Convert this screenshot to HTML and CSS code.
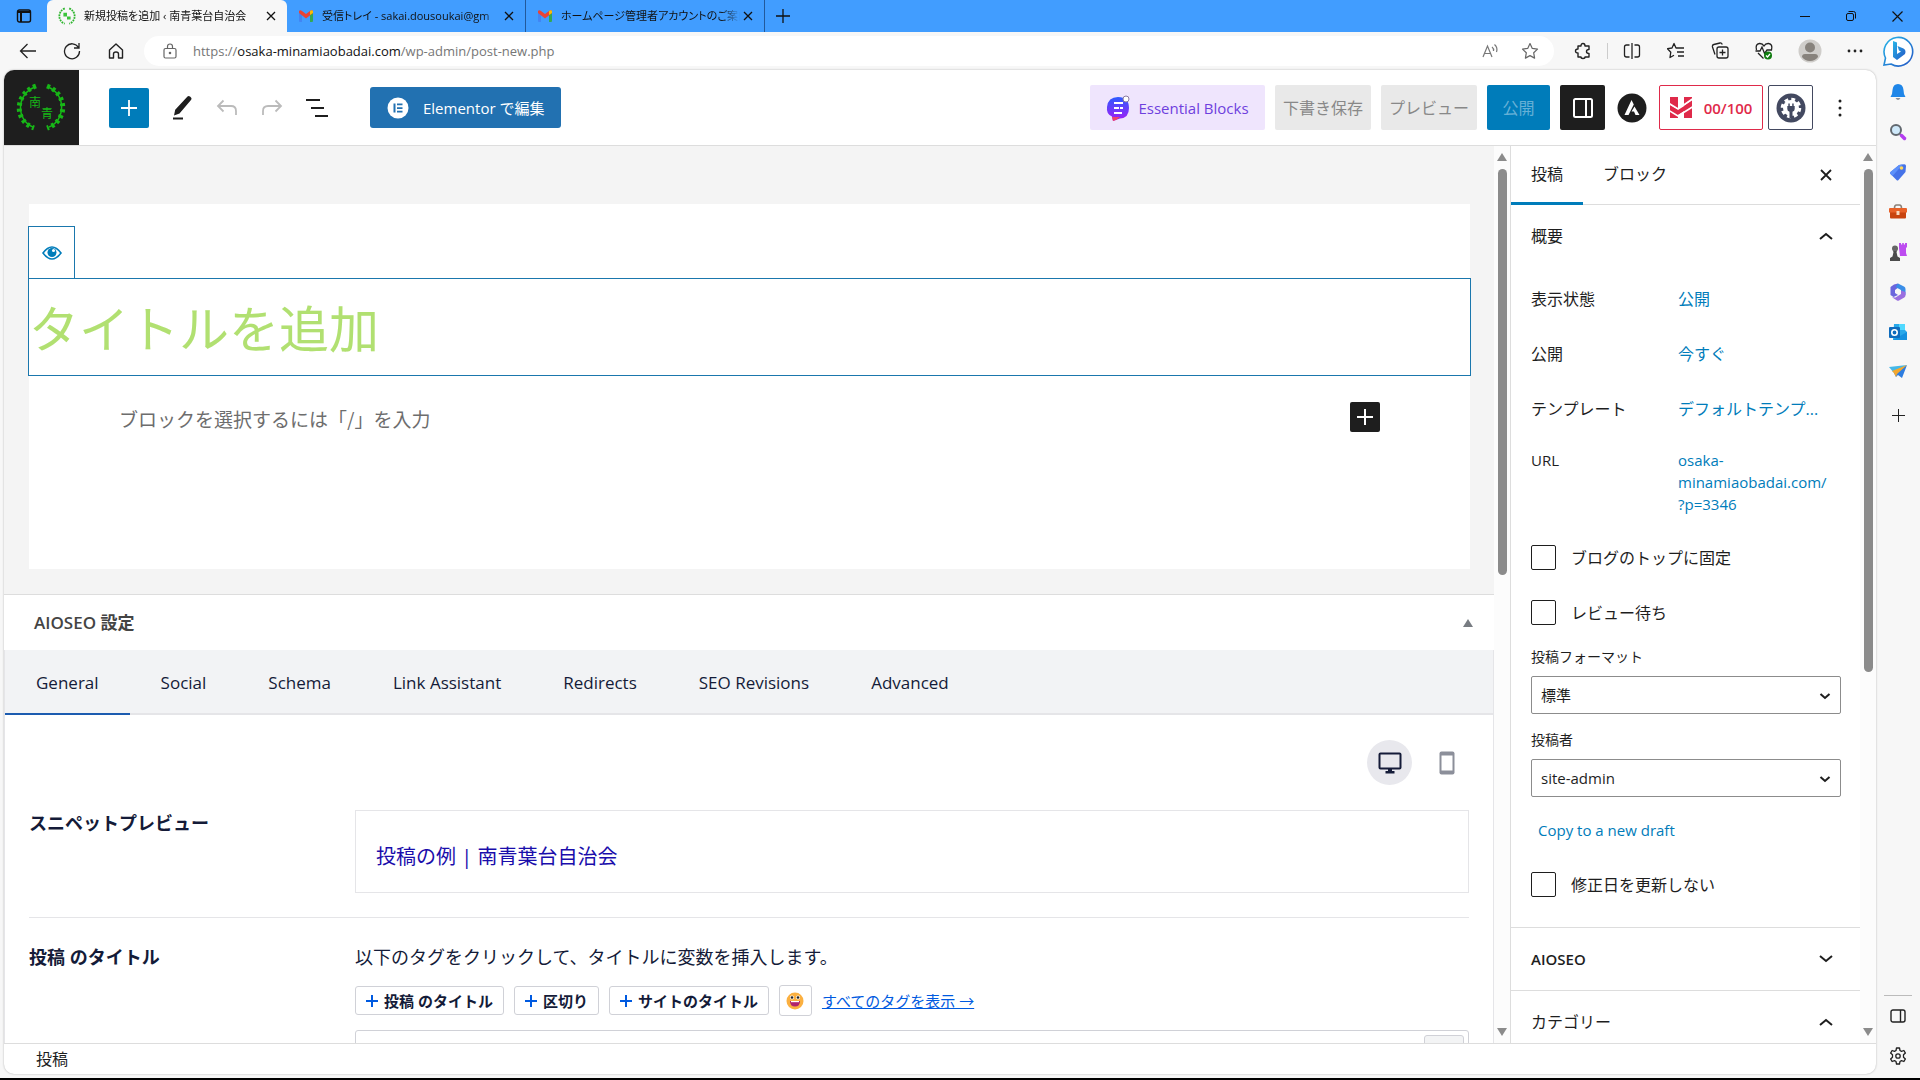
FILE: index.html
```html
<!DOCTYPE html>
<html lang="ja">
  <head>
    <meta charset="utf-8" />
    <title>新規投稿を追加 ‹ 南青葉台自治会</title>
    <meta name="viewport" content="width=device-width, initial-scale=1" />
    <link rel="stylesheet" href="styles.css">
  </head>
  <body>
    <!-- browser tabs -->
    <header class="tabbar">
      <button class="tab-menu" aria-label="タブ操作">
        <svg width="16" height="16" viewBox="0 0 16 16" fill="none" stroke="#111" stroke-width="1.4"><rect x="1.5" y="2" width="13" height="12" rx="2"/><path d="M1.5 4h13M5 5v9" stroke-width="2"/></svg>
      </button>
      <div class="tab active">
        <svg width="18" height="18" viewBox="0 0 40 40"><g fill="none" stroke="#2db52d" stroke-width="4" stroke-dasharray="4 2"><path d="M15 3C-1 10-1 31 15 37M25 3c16 7 16 28 0 34"/></g><path d="M12 13h8v8h-8zM20 21h8v7h-8z" fill="#3ac43a"/></svg>
        <span class="tab-title">新規投稿を追加 ‹ 南青葉台自治会</span>
        <button class="tab-close" aria-label="閉じる"><svg width="10" height="10" viewBox="0 0 10 10" stroke="#111" stroke-width="1.3"><path d="M1 1l8 8M9 1L1 9"/></svg></button>
      </div>
      <div class="tab">
        <svg width="16" height="16" viewBox="0 0 16 16"><path d="M1 3h3v11H2q-1 0-1-1z" fill="#4285f4"/><path d="M12 3h3v10q0 1-1 1h-2z" fill="#34a853"/><path d="M1 3q1-1.500 3 0l4 3 4-3q2-1.500 3 0v2l-7 5.500L1 5z" fill="#ea4335"/><path d="M12 3q2-1.500 3 0v2l-3 2z" fill="#fbbc04"/></svg>
        <span class="tab-title">受信トレイ - sakai.dousoukai@gm</span>
        <button class="tab-close" aria-label="閉じる"><svg width="10" height="10" viewBox="0 0 10 10" stroke="#111" stroke-width="1.3"><path d="M1 1l8 8M9 1L1 9"/></svg></button>
      </div>
      <div class="tab">
        <svg width="16" height="16" viewBox="0 0 16 16"><path d="M1 3h3v11H2q-1 0-1-1z" fill="#4285f4"/><path d="M12 3h3v10q0 1-1 1h-2z" fill="#34a853"/><path d="M1 3q1-1.500 3 0l4 3 4-3q2-1.500 3 0v2l-7 5.500L1 5z" fill="#ea4335"/><path d="M12 3q2-1.500 3 0v2l-3 2z" fill="#fbbc04"/></svg>
        <span class="tab-title">ホームページ管理者アカウントのご案内</span>
        <button class="tab-close" aria-label="閉じる"><svg width="10" height="10" viewBox="0 0 10 10" stroke="#111" stroke-width="1.3"><path d="M1 1l8 8M9 1L1 9"/></svg></button>
      </div>
      <button class="tab-new" aria-label="新しいタブ"><svg width="14" height="14" viewBox="0 0 14 14" stroke="#111" stroke-width="1.3"><path d="M7 0v14M0 7h14"/></svg></button>
      <div class="window-controls">
        <button aria-label="最小化"><svg width="10" height="10" viewBox="0 0 10 10" stroke="#111"><path d="M0 5.500h10"/></svg></button>
        <button aria-label="元に戻す"><svg width="10" height="10" viewBox="0 0 10 10" fill="none" stroke="#111"><rect x=".5" y="2.500" width="7" height="7" rx="1.500"/><path d="M2.500.5h5q2 0 2 2v5"/></svg></button>
        <button aria-label="閉じる"><svg width="11" height="11" viewBox="0 0 11 11" stroke="#111" stroke-width="1.2"><path d="M.5.5l10 10M10.500.5l-10 10"/></svg></button>
      </div>
    </header>

    <!-- address bar -->
    <div class="toolbar">
      <nav class="nav-buttons">
        <button aria-label="戻る"><svg width="18" height="18" viewBox="0 0 18 18" fill="none" stroke="#222" stroke-width="1.3"><path d="M17 9H1.500M8.500 2l-7 7 7 7"/></svg></button>
        <button aria-label="更新"><svg width="18" height="18" viewBox="0 0 18 18" fill="none" stroke="#222" stroke-width="1.3"><path d="M15.500 5.500A7.500 7.500 0 1 0 16.500 9M16 1v5h-5"/></svg></button>
        <button aria-label="ホーム"><svg width="18" height="18" viewBox="0 0 18 18" fill="none" stroke="#222" stroke-width="1.4"><path d="M2.500 8L9 2l6.500 6v8h-4v-4q0-2-2.500-2t-2.500 2v4h-4z" stroke-linejoin="round"/></svg></button>
      </nav>
      <div class="address">
        <svg width="14" height="16" viewBox="0 0 14 16" fill="none" stroke="#666" stroke-width="1.2"><rect x="1" y="5.500" width="12" height="9.500" rx="1.500"/><path d="M4.500 5.500V3.500q0-2.500 2.500-2.500t2.500 2.500v2"/><circle cx="7" cy="10" r=".7" fill="#666"/></svg>
        <div class="url" role="textbox" aria-label="アドレス">https://<b>osaka-minamiaobadai.com</b>/wp-admin/post-new.php</div>
        <button aria-label="音声で読み上げる"><svg width="17" height="16" viewBox="0 0 17 16" fill="none" stroke="#777" stroke-width="1.2"><path d="M1 14L5.500 3 10 14M2.500 10.500h6M10 4q2 1.500 1.500 4M12.500 1.500q3.500 3 2 7.500"/></svg></button>
        <button aria-label="お気に入りに追加"><svg width="18" height="18" viewBox="0 0 18 18" fill="none" stroke="#666" stroke-width="1.2" stroke-linejoin="round"><path d="M9 1.500l2.300 4.900 5.200.7-3.800 3.700.9 5.300L9 13.600l-4.600 2.500.9-5.300L1.500 7.100l5.200-.7z"/></svg></button>
      </div>
      <div class="tools">
        <button aria-label="拡張機能"><svg width="18" height="18" viewBox="0 0 18 18" fill="none" stroke="#222" stroke-width="1.4" stroke-linejoin="round"><path d="M4 4h3q0-2.500 2-2.500T11 4h4v3.500q-2.500 0-2.500 2t2.500 2V15h-4q0 1.500-2 1.500T7 15H4v-4q-2.500 0-2.500-2T4 7z"/></svg></button>
        <i class="divider"></i>
        <button aria-label="画面を分割"><svg width="18" height="18" viewBox="0 0 18 18" fill="none" stroke="#222" stroke-width="1.3"><path d="M6.500 3H3.500q-2 0-2 2v8q0 2 2 2h3M11.500 3h3q2 0 2 2v8q0 2-2 2h-3M9 1v16"/></svg></button>
        <button aria-label="お気に入り"><svg width="18" height="18" viewBox="0 0 18 18" fill="none" stroke="#222" stroke-width="1.3" stroke-linejoin="round"><path d="M11 6L9 6 7 1.500 5 6l-4.500.7 3.300 3.500L3 15.500l4-2.200M11 6h6M10 10h7M11 14h6"/></svg></button>
        <button aria-label="コレクション"><svg width="18" height="18" viewBox="0 0 18 18" fill="none" stroke="#222" stroke-width="1.3"><rect x="6" y="5" width="11" height="11" rx="2"/><path d="M11.500 7.500v6M8.500 10.500h6M4 12.500L1.500 5q-.5-2 1.300-2.500L9 1q1.500-.3 2.300 1.500"/></svg></button>
        <button aria-label="パフォーマンス"><svg width="18" height="18" viewBox="0 0 18 18" fill="none" stroke="#222" stroke-width="1.300"><path d="M1.500 8Q0 2 4.500 1.500 7.500 1.300 9 4q1.500-2.700 4.500-2.500Q18 2 16.500 8M3 11l5.500 5.500M.5 9h4.500l2-4 2.500 6.500L12 8h5"/><circle cx="13" cy="13.500" r="4" fill="#107c10" stroke="none"/><path d="M11 13.500l1.500 1.500 2.500-3" stroke="#fff"/></svg></button>
        <button class="avatar" aria-label="プロファイル"><svg width="24" height="24" viewBox="0 0 24 24"><circle cx="12" cy="12" r="11.500" fill="#cfcdca"/><circle cx="12" cy="8.500" r="5" fill="#87827c"/><path d="M4 18q0-3 3-3h10q3 0 3 3-3 4-8 4t-8-4z" fill="#87827c"/></svg></button>
        <button class="menu" aria-label="設定など"><svg width="16" height="4" viewBox="0 0 16 4" fill="#222"><circle cx="2" cy="2" r="1.400"/><circle cx="8" cy="2" r="1.400"/><circle cx="14" cy="2" r="1.400"/></svg></button>
      </div>
      <button class="bing" aria-label="Bing"><svg width="32" height="32" viewBox="0 0 32 32"><defs><linearGradient id="bing" x1="0" y1="0" x2="1" y2="1"><stop offset="0" stop-color="#27b5e8"/><stop offset="1" stop-color="#2457c5"/></linearGradient></defs><path d="M2 30l1.500-7A14.300 14.300 0 1 1 9 29z" fill="#fff" stroke="url(#bing)" stroke-width="1.600"/><path d="M11 6l4 1.500V19l4-2.500-2-1-1.500-4.500 6 2.500q3 1.500 1.500 5.500L15 25l-4-3z" fill="url(#bing)"/></svg></button>
    </div>

    <div class="workspace">
      <div class="page">
        <!-- editor header -->
        <div class="editor-header">
          <a class="site-logo" href="#" aria-label="投稿を表示">
            <svg width="75" height="75" viewBox="0 0 75 75" fill="none" stroke="#17b717">
              <path d="M31 17C12 24 12 50 29 57M44 17c18 7 18 33 1 40" stroke-width="1.500"/>
              <path d="M32 16C10 24 10 51 30 58M43 16c21 8 21 35 0 42" stroke-width="5" stroke-dasharray="3 3"/>
            </svg>
            <span class="logo-char first">南</span><span class="logo-char second">青</span>
          </a>
          <div class="header-left">
            <button class="insert" aria-label="ブロック挿入ツールを切り替え"><svg width="16" height="16" viewBox="0 0 16 16" stroke="#fff" stroke-width="1.800"><path d="M8 0v16M0 8h16"/></svg></button>
            <button class="icon-btn" aria-label="ツール"><svg width="24" height="26" viewBox="0 0 24 26" fill="#1e1e1e"><path d="M17.500 1.500q1-1.200 2.500 0l1 1q1 1 .2 2.200L9.500 18.500 4 20.500l1.200-5.700z"/><path d="M3 22.500h10v2H3z"/></svg></button>
            <button class="icon-btn" aria-label="元に戻す" disabled><svg width="22" height="18" viewBox="0 0 22 18" fill="none" stroke="#bbb" stroke-width="1.800"><path d="M7.500 1.500L2 7l5.500 5.500M2 7h13q5 0 5 5v4"/></svg></button>
            <button class="icon-btn" aria-label="やり直す" disabled><svg width="22" height="18" viewBox="0 0 22 18" fill="none" stroke="#bbb" stroke-width="1.800"><path d="M14.500 1.500L20 7l-5.500 5.500M20 7H7q-5 0-5 5v4"/></svg></button>
            <button class="icon-btn" aria-label="リスト表示"><svg width="24" height="20" viewBox="0 0 24 20" stroke="#1e1e1e" stroke-width="2"><path d="M1 2h14M6 10h13M10 18h13"/></svg></button>
            <button class="elementor"><svg width="22" height="22" viewBox="0 0 22 22"><circle cx="11" cy="11" r="10.500" fill="#fff"/><path d="M6.500 6.500h2v9h-2zM10 6.500h5.500v1.700H10zM10 10.200h5.500v1.700H10zM10 13.800h5.500v1.700H10z" fill="#2271b1"/></svg>Elementor で編集</button>
          </div>
          <div class="header-right">
            <button class="essential"><svg width="24" height="26" viewBox="0 0 24 26"><defs><linearGradient id="eb" x1="0" y1="0" x2="0" y2="1"><stop offset="0" stop-color="#2d5bff"/><stop offset="1" stop-color="#a51df5"/></linearGradient></defs><path d="M12 2q11 0 11 11 0 10-9 10.500L7 26l-1-4.500Q0 19 1 12 2 2 12 2z" fill="url(#eb)"/><path d="M6 22h8l-4 3-3 1z" fill="#ef4468"/><circle cx="20" cy="4" r="3" fill="#fff" stroke="#8a7aa0"/><path d="M8 8h9M8 13h5M14 13h3M8 18h8" stroke="#fff" stroke-width="2"/></svg>Essential Blocks</button>
            <button class="muted" disabled>下書き保存</button>
            <button class="muted" disabled>プレビュー</button>
            <button class="publish" disabled>公開</button>
            <button class="settings" aria-label="設定"><svg width="22" height="22" viewBox="0 0 22 22" fill="none" stroke="#fff" stroke-width="2"><rect x="2" y="2" width="18" height="18" rx="1.500"/><path d="M14 2v18"/></svg></button>
            <button class="astra" aria-label="Astra 設定"><svg width="30" height="30" viewBox="0 0 30 30"><circle cx="15" cy="15" r="14.500" fill="#1e1e1e"/><path d="M14.500 7l2.300 4.500L11.500 22H7.500zM17.500 13.500L22.500 22h-4l-1.500-3.500h-2.500z" fill="#fff"/></svg></button>
            <button class="score"><svg width="22" height="21" viewBox="0 0 22 21"><path d="M0 0h8v21H0zM14 0h8v21h-8z" fill="#df2a4a"/><path d="M-2 6l10 6L24 1" fill="none" stroke="#fff" stroke-width="2"/><path d="M0 8.500v4.500l8 5L22 9V4L8 13z" fill="#df2a4a"/><path d="M-2 13l10 6 16-10" fill="none" stroke="#fff" stroke-width="1.500"/></svg>00/100</button>
            <button class="aioseo" aria-label="AIOSEO"><svg width="30" height="30" viewBox="0 0 30 30"><circle cx="15" cy="15" r="14.500" fill="#434960"/><circle cx="15" cy="15" r="8" fill="#fff"/><circle cx="15" cy="15" r="8.500" fill="none" stroke="#fff" stroke-width="3.500" stroke-dasharray="3.700 2.980"/><path d="M12.300 10.500h1.500v2.500h2.400v-2.500h1.500V13h1v3q0 2-2.200 2.700V25h-3v-6.300q-2.200-.7-2.200-2.700v-3h1z" fill="#434960"/></svg></button>
            <button class="more" aria-label="オプション"><svg width="4" height="20" viewBox="0 0 4 20" fill="#1e1e1e"><circle cx="2" cy="3" r="1.500"/><circle cx="2" cy="10" r="1.500"/><circle cx="2" cy="17" r="1.500"/></svg></button>
          </div>
        </div>

        <div class="editor-body">
          <main class="editor">
            <section class="canvas">
              <div class="sheet">
                <button class="eye" aria-label="タイトルの表示"><svg width="20" height="14" viewBox="0 0 20 14"><path d="M1 7q9-12 18 0-9 12-18 0z" fill="none" stroke="#007cba" stroke-width="1.600"/><circle cx="10" cy="6.500" r="4.500" fill="#007cba"/><circle cx="11.500" cy="4.500" r="1.500" fill="#fff"/></svg></button>
                <input class="post-title" type="text" placeholder="タイトルを追加" aria-label="タイトルを追加" />
                <div class="block-row">
                  <input class="block-prompt" type="text" placeholder="ブロックを選択するには「/」を入力" aria-label="ブロック" />
                  <button class="block-add" aria-label="ブロックを追加"><svg width="16" height="16" viewBox="0 0 16 16" stroke="#fff" stroke-width="2"><path d="M8 0v16M0 8h16"/></svg></button>
                </div>
              </div>
            </section>

            <section class="metabox">
              <div class="metabox-head">
                <h2>AIOSEO 設定</h2>
                <button aria-label="パネルを切り替え"><svg width="10" height="8" viewBox="0 0 10 8" fill="#787c82"><path d="M5 0l5 8H0z"/></svg></button>
              </div>
              <nav class="seo-tabs">
                <a class="current" href="#">General</a>
                <a href="#">Social</a>
                <a href="#">Schema</a>
                <a href="#">Link Assistant</a>
                <a href="#">Redirects</a>
                <a href="#">SEO Revisions</a>
                <a href="#">Advanced</a>
              </nav>
              <div class="seo-content">
                <div class="devices">
                  <button class="selected" aria-label="デスクトップ"><svg width="24" height="22" viewBox="0 0 24 22"><rect x="1.500" y="1.500" width="21" height="15" rx="1" fill="none" stroke="#141b38" stroke-width="2"/><path d="M10 17h4v2h2.500v2.500h-9V19H10z" fill="#141b38"/></svg></button>
                  <button aria-label="モバイル"><svg width="16" height="24" viewBox="0 0 16 24"><rect x=".5" y=".5" width="15" height="23" rx="2" fill="#8c8f9a"/><path d="M2.500 4.500h11v15h-11z" fill="#fff"/></svg></button>
                </div>
                <div class="seo-row">
                  <h3>スニペットプレビュー</h3>
                  <div class="snippet">投稿の例 | 南青葉台自治会</div>
                </div>
                <hr />
                <div class="seo-row">
                  <h3>投稿 のタイトル</h3>
                  <div>
                    <p>以下のタグをクリックして、タイトルに変数を挿入します。</p>
                    <div class="tags">
                      <button><svg width="12" height="12" viewBox="0 0 12 12" stroke="#005ae0" stroke-width="2"><path d="M6 0v12M0 6h12"/></svg>投稿 のタイトル</button>
                      <button><svg width="12" height="12" viewBox="0 0 12 12" stroke="#005ae0" stroke-width="2"><path d="M6 0v12M0 6h12"/></svg>区切り</button>
                      <button><svg width="12" height="12" viewBox="0 0 12 12" stroke="#005ae0" stroke-width="2"><path d="M6 0v12M0 6h12"/></svg>サイトのタイトル</button>
                      <button class="emoji" aria-label="絵文字"><svg width="18" height="18" viewBox="0 0 18 18"><circle cx="9" cy="9" r="8.500" fill="#fbb040"/><circle cx="6" cy="5.500" r="2" fill="#fff"/><circle cx="12" cy="5.500" r="2" fill="#fff"/><circle cx="6" cy="5.500" r="1.300" fill="#222"/><circle cx="12" cy="5.500" r="1.300" fill="#222"/><path d="M4 9h10q0 5.500-5 5.500T4 9z" fill="#b0226d"/><path d="M5 9h8v1.200H5z" fill="#fff"/></svg></button>
                      <a href="#">すべてのタグを表示 →</a>
                    </div>
                    <div class="title-input"><input type="text" aria-label="投稿 のタイトル" /><button aria-label="タグを選択"></button></div>
                  </div>
                </div>
              </div>
            </section>
          </main>
          <div class="scroll editor-scroll"><i class="up"></i><i class="thumb"></i><i class="down"></i></div>

          <!-- post settings -->
          <aside class="sidebar">
            <div class="side-tabs">
              <button class="current">投稿</button>
              <button>ブロック</button>
              <button class="side-close" aria-label="設定を閉じる"><svg width="12" height="12" viewBox="0 0 12 12" stroke="#1e1e1e" stroke-width="1.800"><path d="M1 1l10 10M11 1L1 11"/></svg></button>
            </div>
            <section class="summary">
              <button class="panel-head">概要<svg width="14" height="8" viewBox="0 0 14 8" fill="none" stroke="#1e1e1e" stroke-width="2"><path d="M1 7l6-5 6 5"/></svg></button>
              <dl>
                <div><dt>表示状態</dt><dd><a href="#">公開</a></dd></div>
                <div><dt>公開</dt><dd><a href="#">今すぐ</a></dd></div>
                <div><dt>テンプレート</dt><dd><a href="#">デフォルトテンプ...</a></dd></div>
                <div class="url-row"><dt>URL</dt><dd><a href="#">osaka-<br />minamiaobadai.com/<br />?p=3346</a></dd></div>
              </dl>
              <label class="check"><input type="checkbox" />ブログのトップに固定</label>
              <label class="check"><input type="checkbox" />レビュー待ち</label>
              <div class="field">
                <label for="format">投稿フォーマット</label>
                <div class="select">
                  <select id="format"><option>標準</option></select>
                  <svg width="12" height="8" viewBox="0 0 12 8" fill="none" stroke="#1e1e1e" stroke-width="2"><path d="M1.500 2L6 6l4.500-4"/></svg>
                </div>
              </div>
              <div class="field">
                <label for="author">投稿者</label>
                <div class="select">
                  <select id="author"><option>site-admin</option></select>
                  <svg width="12" height="8" viewBox="0 0 12 8" fill="none" stroke="#1e1e1e" stroke-width="2"><path d="M1.500 2L6 6l4.500-4"/></svg>
                </div>
              </div>
              <a class="copy" href="#">Copy to a new draft</a>
              <label class="check"><input type="checkbox" />修正日を更新しない</label>
            </section>
            <button class="panel-head lined strong">AIOSEO<svg width="14" height="8" viewBox="0 0 14 8" fill="none" stroke="#1e1e1e" stroke-width="2"><path d="M1 1l6 5 6-5"/></svg></button>
            <button class="panel-head lined">カテゴリー<svg width="14" height="8" viewBox="0 0 14 8" fill="none" stroke="#1e1e1e" stroke-width="2"><path d="M1 7l6-5 6 5"/></svg></button>
          </aside>
          <div class="scroll sidebar-scroll"><i class="up"></i><i class="thumb"></i><i class="down"></i></div>
        </div>
        <footer class="editor-footer">投稿</footer>
      </div>

      <!-- browser side rail -->
      <aside class="rail">
        <button aria-label="通知"><svg width="18" height="18" viewBox="0 0 18 18"><path d="M9 1q5 0 5.500 6l.5 4 1.500 3h-15L3 11l.5-4Q4 1 9 1z" fill="#1f86e8"/><path d="M6.500 15h5q-2.500 4-5 0z" fill="#8a8f98"/></svg></button>
        <button aria-label="検索"><svg width="18" height="18" viewBox="0 0 18 18"><circle cx="7" cy="7" r="5" fill="#cfe9fa" stroke="#62686f" stroke-width="2"/><path d="M11 11l2 2" stroke="#62686f" stroke-width="2"/><path d="M12.500 12.500l3 3" stroke="#b43df0" stroke-width="3.500" stroke-linecap="round"/></svg></button>
        <button aria-label="ショッピング"><svg width="18" height="18" viewBox="0 0 18 18"><path d="M10 2l5-.8q2-.2 2 1.800l-.5 6-7 8q-1 1-2 0L1.500 11q-1-1 0-2z" fill="#4673e8"/><path d="M10 2L1.500 9q-1 1 0 2l2 2L14 1.300z" fill="#5d91fb"/><circle cx="12.500" cy="5" r="1.800" fill="#ffd75c"/></svg></button>
        <button aria-label="ツール"><svg width="18" height="18" viewBox="0 0 18 18"><path d="M5.500 5q0-3 2-3h3q2 0 2 3" fill="none" stroke="#8b8078" stroke-width="1.600"/><path d="M1 9h16v5.500q0 1-1 1H2q-1 0-1-1z" fill="#c8440f"/><path d="M1 5h16q1 0 1 1v3.500H0V6q0-1 1-1z" fill="#e86128"/><path d="M7.500 8h3v4h-3z" fill="#f7d9bf"/></svg></button>
        <button aria-label="ゲーム"><svg width="18" height="18" viewBox="0 0 18 18"><path d="M10 0h2v1.500h1.200V0h1.600v1.500H16V0h2v4l-1 1v5l1 3h-7l-1-8z" fill="#bd4cf0"/><circle cx="6" cy="5.500" r="3" fill="#666"/><path d="M4 8h4l-.5 1 1 4.500L11 15v3H1v-3l2.500-1.500 1-4.500z" fill="#4b4b4b"/></svg></button>
        <button aria-label="Microsoft 365"><svg width="18" height="18" viewBox="0 0 18 18"><path d="M9 .5L5 1.500 1.500 4v8l3 2 4.500-2-3-2V7l4-3z" fill="#6b65dd"/><path d="M9 .5l6 3q1.500.8 1.500 2.500v6L12 10V7L6.500 4z" fill="#3a8ee8"/><path d="M16.500 9v3.500q0 1.200-1.200 2L10 17.500q-1 .5-2 0l-5-3.200 3.500.2L12 11V7.500z" fill="#9a6fe0"/></svg></button>
        <button aria-label="Outlook"><svg width="18" height="18" viewBox="0 0 18 18"><path d="M5 1h11v6l2 2v8H4z" fill="#28a8ea"/><path d="M10 1h6v6h-6z" fill="#50d9ff"/><path d="M4 17l14-8v8z" fill="#1490df"/><rect y="4" width="11" height="11" rx="1" fill="#0f6cbd"/><circle cx="5.500" cy="9.500" r="2.700" fill="none" stroke="#fff" stroke-width="1.600"/></svg></button>
        <button aria-label="Drop"><svg width="18" height="18" viewBox="0 0 18 18"><path d="M5 10L18 2l-5 13-4-3-2 2z" fill="#2e7de0"/><path d="M0 4l18-2L5 10z" fill="#45b8e8"/><path d="M3 8L18 2 8 11l-1 3-2-4z" fill="#f3a72e"/></svg></button>
        <button class="rail-add" aria-label="追加"><svg width="13" height="13" viewBox="0 0 13 13" stroke="#222" stroke-width="1"><path d="M6.500 0v13M0 6.500h13"/></svg></button>
        <div class="rail-bottom">
          <button aria-label="サイドバー"><svg width="16" height="14" viewBox="0 0 16 14" fill="none" stroke="#222" stroke-width="1.400"><rect x="1" y="1" width="14" height="12" rx="2"/><path d="M10.500 1v12"/></svg></button>
          <button aria-label="設定"><svg width="18" height="18" viewBox="0 0 18 18" fill="none" stroke="#222" stroke-width="1.300" stroke-linejoin="round"><path d="M7.500 1h3l.5 2.500 1.500.9 2.400-.9 1.500 2.600-1.900 1.700v2.400l1.900 1.700-1.500 2.600-2.400-.9-1.500.9-.5 2.500h-3L7 14.500l-1.500-.9-2.400.9-1.500-2.600 1.900-1.700V7.800L1.600 6.100l1.500-2.600 2.400.9L7 3.500z"/><circle cx="9" cy="9" r="2.200"/></svg></button>
        </div>
      </aside>
    </div>
  </body>
</html>
```

FILE: styles.css
```css
* {
  box-sizing: border-box;
}
body {
  margin: 0;
  height: 100vh;
  display: flex;
  flex-direction: column;
  overflow: hidden;
  border-bottom: 2px solid #000;
  background: #f7f7f7;
  color: #1e1e1e;
  font-family: "Open Sans", "Noto Sans CJK JP", sans-serif;
  font-size: 16px;
  line-height: 22px;
}
button {
  padding: 0;
  border: 0;
  background: none;
  color: inherit;
  font: inherit;
  display: flex;
  align-items: center;
  justify-content: center;
}
input, select {
  font: inherit;
  color: inherit;
}
a {
  color: #007cba;
  text-decoration: none;
}
svg {
  flex: none;
  display: block;
}
h2, h3, p, dl, dd {
  margin: 0;
}

/* tabs */
.tabbar {
  flex: none;
  display: flex;
  height: 32px;
  background: #419dff;
  color: #111;
  font-size: 11px;
  line-height: 18px;
}
.tab-menu {
  width: 47px;
}
.tab {
  width: 239px;
  display: flex;
  align-items: center;
  gap: 8px;
  padding: 0 8px 0 11px;
  border-right: 1px solid #22599b;
  font-feature-settings: "palt";
}
.tab.active {
  width: 240px;
  border: 0;
  border-radius: 6px 6px 0 0;
  background: #f7f7f7;
}
.tab-title {
  flex: 1;
  margin-right: -8px;
  overflow: hidden;
  white-space: nowrap;
  mask-image: linear-gradient(to right, #000 90%, transparent);
}
.tab-close {
  width: 16px;
  height: 16px;
}
.tab-new {
  width: 36px;
}
.window-controls {
  display: flex;
  margin-left: auto;
}
.window-controls button {
  width: 46px;
}

/* address bar */
.toolbar {
  flex: none;
  display: flex;
  align-items: center;
  height: 38px;
}
.nav-buttons {
  display: flex;
  padding: 0 6px;
}
.nav-buttons button {
  width: 44px;
  height: 30px;
}
.address {
  flex: 1;
  display: flex;
  align-items: center;
  gap: 22px;
  height: 30px;
  padding: 0 15px 0 19px;
  border-radius: 15px;
  background: #fff;
}
.url {
  flex: 1;
  margin-left: -6px;
  color: #767676;
  font-size: 13px;
}
.url b {
  color: #111;
  font-weight: 400;
}
.tools {
  display: flex;
  align-items: center;
  padding-left: 14px;
}
.tools button {
  width: 44px;
  height: 30px;
}
.tools button:first-child {
  width: 30px;
}
.tools .avatar {
  width: 48px;
}
.tools .menu {
  width: 42px;
}
.divider {
  width: 1px;
  height: 16px;
  margin: 0 2px 0 9px;
  background: #ccc;
}
.bing {
  width: 44px;
}

/* page frame */
.workspace {
  flex: 1;
  display: flex;
  min-height: 0;
}
.page {
  flex: 1;
  min-width: 0;
  display: flex;
  flex-direction: column;
  margin: 0 0 4px 4px;
  overflow: hidden;
  border-radius: 10px;
  background: #fff;
  box-shadow: 0 0 2px #aaa;
}
.editor-header {
  flex: none;
  display: flex;
  align-items: center;
  height: 76px;
  border-bottom: 1px solid #ddd;
}
.site-logo {
  position: relative;
  width: 75px;
  height: 75px;
  background: #1e1e1e;
}
.logo-char {
  position: absolute;
  color: #17b717;
  font-size: 12px;
  line-height: 14px;
}
.logo-char.first {
  left: 25px;
  top: 26px;
}
.logo-char.second {
  left: 37px;
  top: 37px;
}
.header-left {
  display: flex;
  align-items: center;
  padding-left: 30px;
}
.insert {
  width: 40px;
  height: 40px;
  margin-right: 10px;
  border-radius: 2px;
  background: #007cba;
}
.icon-btn {
  width: 45px;
  height: 40px;
}
.elementor {
  gap: 14px;
  height: 41px;
  margin-left: 31px;
  padding: 0 17px;
  border-radius: 3px;
  background: #2271b1;
  color: #fff;
  font-size: 15px;
}
.header-right {
  display: flex;
  align-items: center;
  gap: 10px;
  margin-left: auto;
  padding-right: 19px;
}
.header-right button {
  height: 45px;
  border-radius: 2px;
}
.essential {
  gap: 8px;
  padding: 0 15px;
  background: #efe5fd;
  color: #6e3fde;
  font-size: 15px;
}
.header-right .essential {
  min-width: 175px;
}
.muted {
  padding: 0 8px;
  background: #e9e9e9;
  color: #888;
}
.publish {
  width: 63px;
  background: #007cba;
  color: #66b0d6;
}
.settings {
  width: 45px;
  background: #1e1e1e;
}
.header-right .astra {
  margin: 0 2px;
}
.score {
  gap: 12px;
  width: 104px;
  border: 1px solid #df2a4a;
  color: #df2a4a;
  font-size: 15px;
  font-weight: 600;
}
.aioseo {
  width: 45px;
  margin-left: -5px;
  border: 1px solid #434960;
}
.more {
  width: 34px;
}
.editor-body {
  flex: 1;
  display: flex;
  min-height: 0;
}
.editor {
  flex: 1;
  min-width: 0;
  overflow: hidden;
}

/* canvas */
.canvas {
  padding: 58px 24px 25px 25px;
  background: #f4f4f4;
}
.sheet {
  height: 365px;
  padding-top: 22px;
  background: #fff;
}
.eye {
  width: 47px;
  height: 53px;
  margin-left: -1px;
  border: 1px solid #1a77ad;
}
.post-title {
  display: block;
  width: calc(100% + 2px);
  height: 98px;
  margin: -1px -1px 0;
  padding: 0 0 2px;
  border: 1px solid #1a77ad;
  background: #fff;
  font-size: 50px;
  font-family: "Noto Sans CJK JP", sans-serif;
}
.post-title::placeholder {
  color: #b1e071;
}
.block-row {
  display: flex;
  align-items: center;
  justify-content: space-between;
  padding: 26px 90px 0;
}
.block-prompt {
  flex: 1;
  padding: 4px 0 0;
  border: 0;
  font-size: 19px;
  font-family: "Noto Sans CJK JP", sans-serif;
}
.block-prompt::placeholder {
  color: #6d6d6d;
}
.block-add {
  width: 30px;
  height: 30px;
  border-radius: 2px;
  background: #1e1e1e;
}

/* AIOSEO box */
.metabox {
  border-top: 1px solid #ddd;
  color: #141b38;
}
.metabox-head {
  display: flex;
  align-items: center;
  justify-content: space-between;
  height: 55px;
  padding: 0 21px 0 30px;
}
.metabox-head h2 {
  color: #444;
  font-size: 17px;
  font-weight: 600;
}
.seo-tabs {
  display: flex;
  height: 65px;
  border: 1px solid #e5e5e8;
  border-width: 0 1px 2px;
  background: #f2f3f5;
}
.seo-tabs a {
  padding: 0 31px;
  margin-bottom: -2px;
  border-bottom: 2px solid transparent;
  color: #141b38;
  font-size: 17px;
  font-weight: 500;
  line-height: 66px;
}
.seo-tabs .current {
  border-color: #1c5cb0;
}
.seo-content {
  padding: 25px 24px 0;
  border: 1px solid #e5e5e8;
  border-width: 0 1px;
  font-size: 18px;
}
.devices {
  display: flex;
  justify-content: flex-end;
  gap: 12px;
  margin-bottom: 25px;
}
.devices button {
  width: 45px;
  height: 45px;
  border-radius: 50%;
}
.devices .selected {
  background: #e8e8ed;
}
.seo-row {
  display: grid;
  grid-template-columns: 326px 1fr;
}
.seo-row h3 {
  padding-top: 2px;
  font-size: 18px;
  font-weight: 700;
}
.snippet {
  padding: 35px 20px 24px;
  border: 1px solid #e5e5e8;
  color: #1a0dab;
  font-size: 20px;
}
.seo-content hr {
  margin: 24px 0 26px;
  border: 0;
  border-top: 1px solid #e5e5e8;
}
.seo-row p {
  padding: 2px 0 17px;
}
.tags {
  display: flex;
  align-items: center;
  gap: 10px;
  font-size: 15px;
}
.tags button {
  gap: 6px;
  height: 29px;
  padding: 0 10px;
  border: 1px solid #d0d1d7;
  border-radius: 3px;
  font-weight: 700;
}
.tags .emoji {
  width: 33px;
  height: 31px;
  padding: 0;
}
.tags a {
  color: #005ae0;
  text-decoration: underline;
}
.title-input {
  display: flex;
  height: 50px;
  margin-top: 14px;
  padding: 4px;
  border: 1px solid #d0d1d7;
  border-radius: 3px;
}
.title-input input {
  flex: 1;
  border: 0;
}
.title-input button {
  width: 40px;
  border: 1px solid #d0d1d7;
  border-radius: 3px;
  background: #f3f4f5;
}

/* scroll bars */
.scroll {
  flex: none;
  display: flex;
  flex-direction: column;
  align-items: center;
  width: 16px;
  padding: 7px 0;
  background: #fcfcfc;
}
.up, .down {
  border: 5px solid transparent;
}
.up {
  border-top: 0;
  border-bottom: 8px solid #8b8b8b;
}
.down {
  margin-top: auto;
  border-bottom: 0;
  border-top: 8px solid #8b8b8b;
}
.thumb {
  width: 9px;
  height: 46%;
  margin-top: 8px;
  border-radius: 5px;
  background: #8b8b8b;
}
.sidebar-scroll .thumb {
  height: 57%;
}

/* post settings */
.sidebar {
  flex: none;
  width: 350px;
  overflow: hidden;
  border-left: 1px solid #ddd;
}
.side-tabs {
  display: flex;
  height: 59px;
  border-bottom: 1px solid #ddd;
}
.side-tabs button {
  padding: 0 20px 2px;
}
.side-tabs .current {
  margin-bottom: -1px;
  padding-bottom: 0;
  border-bottom: 3px solid #007cba;
}
.side-tabs .side-close {
  margin-left: auto;
  padding: 0 28px 0 0;
}
.panel-head {
  width: 100%;
  height: 62px;
  justify-content: space-between;
  padding: 0 27px 0 20px;
}
.panel-head.lined {
  height: 63px;
  border-top: 1px solid #ddd;
}
.panel-head.strong {
  font-size: 15px;
  font-weight: 600;
}
.summary dl {
  display: grid;
  gap: 10px;
  padding: 9px 20px 0;
}
.summary dl > div {
  display: grid;
  grid-template-columns: 147px 150px;
  align-items: center;
  min-height: 45px;
}
.summary .url-row {
  align-items: start;
  padding: 8px 0 10px;
  font-size: 15px;
}
.check {
  display: flex;
  align-items: center;
  gap: 15px;
  height: 25px;
  margin: 20px 20px 30px;
}
.check input {
  appearance: none;
  width: 25px;
  height: 25px;
  margin: 0;
  border: 1px solid #1e1e1e;
  border-radius: 2px;
}
.check + .field {
  margin-top: -9px;
}
.field {
  padding: 0 19px 15px 20px;
}
.field label {
  display: block;
  margin-bottom: 8px;
  font-size: 14px;
}
.select {
  position: relative;
}
.select svg {
  position: absolute;
  right: 10px;
  top: 16px;
  pointer-events: none;
}
.field select {
  appearance: none;
  display: block;
  width: 100%;
  height: 38px;
  padding: 0 9px;
  border: 1px solid #8c8c8c;
  border-radius: 2px;
  background: #fff;
  font-size: 15px;
}
.copy {
  display: block;
  margin: 7px 27px 31px;
  font-size: 15px;
}
.editor-footer {
  flex: none;
  height: 31px;
  padding: 4px 32px;
  border-top: 1px solid #ddd;
}

/* side rail */
.rail {
  flex: none;
  width: 44px;
  display: flex;
  flex-direction: column;
  align-items: center;
  padding: 2px 0;
}
.rail button {
  width: 40px;
  height: 40px;
}
.rail .rail-add {
  margin-top: 3px;
}
.rail-bottom {
  margin-top: auto;
  border-top: 1px solid #bbb;
}
.rail-bottom button {
  width: 28px;
}
```
